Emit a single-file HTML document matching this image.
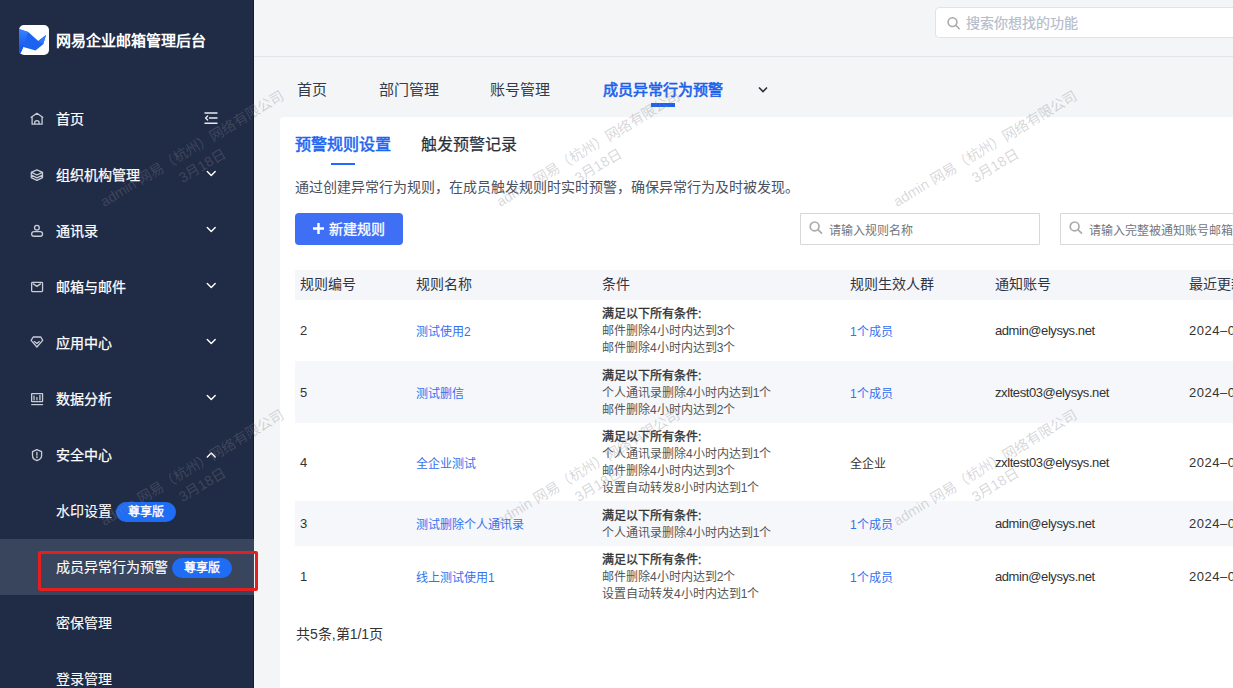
<!DOCTYPE html>
<html lang="zh-CN"><head><meta charset="utf-8">
<style>
*{box-sizing:border-box;margin:0;padding:0}
html,body{width:1233px;height:688px;overflow:hidden}
body{position:relative;font-family:"Liberation Sans",sans-serif;background:#f3f5f7;color:#333}
.abs{position:absolute}
#side{position:absolute;left:0;top:0;width:254px;height:688px;background:#202b46}
#side .edge{position:absolute;left:253px;top:0;width:1px;height:688px;background:#151d33}
.logo{position:absolute;left:19px;top:25px;width:30px;height:30px;border-radius:5px;background:#fff;overflow:hidden}
.brand{position:absolute;left:56px;top:31px;font-size:15px;line-height:20px;font-weight:700;color:#fff;white-space:nowrap}
.nav{position:absolute;left:0;width:254px;height:56px}
.nav .ic{position:absolute;left:30px;top:21px;width:14px;height:14px}
.nav .t{position:absolute;left:56px;top:18px;font-size:14px;line-height:20px;color:#fff;white-space:nowrap;-webkit-text-stroke:0.25px #fff}
.nav .t.sub{-webkit-text-stroke:0.12px #fff}
.nav .chev{position:absolute;left:206px;top:24px;width:10px;height:8px}
.badge{display:inline-block;vertical-align:top;position:relative;top:1px;margin-left:4px;-webkit-text-stroke:0.35px #fff;width:60px;height:20px;border-radius:10px;background:#1f6cf5;color:#fff;font-size:12px;line-height:20px;text-align:center;font-weight:400}
#hdr{position:absolute;left:254px;top:0;right:0;height:57px;border-bottom:1px solid #e2e6ec;background:#f3f5f7}
.gsearch{position:absolute;left:935px;top:7px;width:320px;height:31px;border:1px solid #dfe3ea;border-radius:4px;background:#fff}
.ptab{position:absolute;top:80px;font-size:15px;line-height:20px;color:#333a48;white-space:nowrap}
.card{position:absolute;left:280px;top:117px;width:1000px;height:600px;background:#fff;border-radius:4px}
.stab{position:absolute;top:134px;font-size:16px;line-height:22px;white-space:nowrap}
.desc{position:absolute;left:295px;top:177px;font-size:14px;line-height:20px;color:#4b5161;white-space:nowrap}
.btn{position:absolute;left:295px;top:213px;width:108px;height:32px;border-radius:4px;background:#3f6ff5;color:#fff}
.inp{position:absolute;top:213px;height:32px;border:1px solid #d6d7da;border-radius:1px;background:#fff}
.inp span{position:absolute;left:28px;top:9px;font-size:12px;line-height:17px;color:#72767e;white-space:nowrap}
table{position:absolute;left:295px;top:270px;border-collapse:collapse;width:1000px;table-layout:fixed}
th{height:30px;background:#f5f6f9;font-weight:400;font-size:14px;line-height:18px;color:#2f3546;text-align:left;padding:5px 0 7px 5px;white-space:nowrap}
td{font-size:12px;line-height:17px;color:#333;padding:5px 0 5px 5px;vertical-align:middle;white-space:nowrap}
tr.g td{background:#f6f7fa}
td.num,td.mail{font-size:13px}
td.mail{letter-spacing:-0.42px}
td.date{font-size:13px;letter-spacing:0.5px}
.lnk{color:#3470f0}
td.lnk,td.cjk{padding-top:7px;padding-bottom:3px}
td.cond{padding:6px 0 4px 5px;color:#555}
.cond b{font-weight:400;color:#333;-webkit-text-stroke:0.35px #333}
.wm{position:absolute;width:260px;margin-left:-130px;text-align:center;font-size:14.2px;line-height:20px;color:rgba(130,130,140,0.33);white-space:nowrap;transform:rotate(-31deg);pointer-events:none}
</style></head><body>

<div id="side">
  <div class="edge"></div>
  <div class="logo">
    <svg width="30" height="30" viewBox="0 0 30 30">
      <defs><linearGradient id="lg1" x1="0" y1="0" x2="0" y2="1"><stop offset="0" stop-color="#3a84ff"/><stop offset="1" stop-color="#0b4ee8"/></linearGradient></defs>
      <polygon points="0,3.9 9.2,7 19.3,16.1 27,10 24.2,19.3 16.5,25.4 4.3,22.1 1.5,28.2 0,27.4" fill="#1c63f4"/>
      <polygon points="0,3.9 9.2,7 4.3,22.1 1.5,28.2 0,27.4" fill="url(#lg1)"/>
      <polygon points="19.3,16.1 27,10 24.2,19.3" fill="#2f7cff"/>
    </svg>
  </div>
  <div class="brand">网易企业邮箱管理后台</div>

  <div class="nav" style="top:91px"><div class="t">首页</div></div>
  <div class="nav" style="top:147px"><div class="t">组织机构管理</div></div>
  <div class="nav" style="top:203px"><div class="t">通讯录</div></div>
  <div class="nav" style="top:259px"><div class="t">邮箱与邮件</div></div>
  <div class="nav" style="top:315px"><div class="t">应用中心</div></div>
  <div class="nav" style="top:371px"><div class="t">数据分析</div></div>
  <div class="nav" style="top:427px"><div class="t">安全中心</div></div>
  <div class="nav" style="top:483px"><div class="t sub">水印设置<span class="badge">尊享版</span></div></div>
  <div class="nav" style="top:539px;background:#39445d"><div class="t sub">成员异常行为预警<span class="badge">尊享版</span></div></div>
  <div class="nav" style="top:595px"><div class="t sub">密保管理</div></div>
  <div class="nav" style="top:651px"><div class="t sub">登录管理</div></div>
<svg class="abs" style="left:0;top:0" width="254" height="688" viewBox="0 0 254 688" fill="none" stroke="#c9cdd6" stroke-width="1.3" stroke-linejoin="round" stroke-linecap="round">
  <path d="M31.2 117.3 L36.9 113.3 L42.7 117.3 M32.1 117 V124.2 H42.1 V117 M34.7 124.2 V122.8 A2.2 2.2 0 0 1 39.1 122.8 V124.2"/>
  <path d="M36.9 169.9 L42.5 172.3 V177.6 L36.9 180.3 L31.3 177.6 V172.3 Z M31.3 172.3 L36.9 175 L42.5 172.3 M31.3 175.2 L36.9 177.8 L42.5 175.2"/>
  <circle cx="36.9" cy="227.8" r="2.4"/><rect x="31.65" y="231.65" width="10.9" height="4.6" rx="2.3"/>
  <rect x="31.65" y="282.45" width="10.9" height="9.2" rx="0.8"/><path d="M33.3 283.9 L36.9 286.4 L40.5 283.9"/>
  <path d="M33.2 337 H40.8 L42.7 340.4 L36.9 347 L31.1 340.4 Z M34.3 341.6 L36.9 343.6 L39.3 341.6"/>
  <rect x="31.65" y="393.55" width="10.9" height="8.1" rx="0.3"/><path d="M31.2 404.6 H43.1" stroke-linecap="butt" stroke-width="1.2"/>
  <g fill="#9aa0ad" stroke="none"><rect x="33.2" y="395.6" width="1.7" height="4.8"/><rect x="36" y="396.9" width="1.7" height="3.5"/><rect x="39" y="394.9" width="1.8" height="5.5"/></g>
  <path d="M36.9 449.6 L41.6 451.6 V455.5 C41.6 458.2 39.4 459.9 36.9 460.5 C34.4 459.9 32.5 458.2 32.5 455.5 V451.6 Z M36.9 452.5 V455.2"/>
  <circle cx="36.9" cy="457.3" r="0.3" fill="#c9cdd6"/>
  <g stroke="#e8eaef" stroke-width="1.4"><path d="M205 113 H217 M209.5 118 H217 M205 123.3 H217 M207.6 116 L205.6 118 L207.6 120"/></g>
  <g stroke="#fff" stroke-width="1.4"><path d="M207.3 171.4 L211.25 175.4 L215.2 171.4 M207.3 227.4 L211.25 231.4 L215.2 227.4 M207.3 283.4 L211.25 287.4 L215.2 283.4 M207.3 339.4 L211.25 343.4 L215.2 339.4 M207.3 395.4 L211.25 399.4 L215.2 395.4 M207.3 457 L211.25 453 L215.2 457"/></g>
</svg>
</div>
<div class="abs" style="left:38px;top:551px;width:220px;height:40px;border:3px solid #e3201f;border-radius:2px"></div>

<div id="hdr"></div>
<div class="gsearch"><svg class="abs" style="left:10px;top:6px" width="16" height="16" viewBox="0 0 16 16" fill="none" stroke="#a9a9a9" stroke-width="1.6" stroke-linecap="round"><circle cx="6.5" cy="8.1" r="4.4"/><path d="M9.8 11.3 L13.2 14.7"/></svg><span class="abs" style="left:30px;top:5px;font-size:14px;line-height:20px;color:#b5bccb;-webkit-text-stroke:0.2px #b5bccb">搜索你想找的功能</span></div>

<div class="ptab" style="left:297px">首页</div>
<div class="ptab" style="left:379px">部门管理</div>
<div class="ptab" style="left:490px">账号管理</div>
<div class="ptab" style="left:603px;color:#1d62ea;-webkit-text-stroke:0.6px #1d62ea">成员异常行为预警</div>
<div class="abs" style="left:651px;top:103px;width:24px;height:3.5px;background:#1d62ea"></div>

<svg class="abs" style="left:757px;top:85px" width="12" height="10" viewBox="0 0 12 10" fill="none" stroke="#2b303c" stroke-width="1.6"><path d="M2 2.5 L6 6.5 L10 2.5"/></svg>
<div class="card"></div>
<div class="stab" style="left:295px;color:#1e66f2;-webkit-text-stroke:0.55px #1e66f2">预警规则设置</div>
<div class="stab" style="left:421px;color:#2b2f3a;-webkit-text-stroke:0.2px #2b2f3a">触发预警记录</div>
<div class="abs" style="left:331px;top:163px;width:24px;height:2px;background:#1f6bff"></div>
<div class="desc">通过创建异常行为规则，在成员触发规则时实时预警，确保异常行为及时被发现。</div>
<div class="btn"><svg class="abs" style="left:18px;top:10px" width="12" height="12" viewBox="0 0 12 12" stroke="#fff" stroke-width="2.4"><path d="M0 5.5 H11 M5.5 0 V11"/></svg><span class="abs" style="left:34px;top:6px;font-size:14px;line-height:20px;-webkit-text-stroke:0.3px #fff">新建规则</span></div>
<div class="inp" style="left:800px;width:240px"><svg class="abs" style="left:8px;top:7px" width="16" height="16" viewBox="0 0 16 16" fill="none" stroke="#ababab" stroke-width="1.7" stroke-linecap="round"><circle cx="5.6" cy="5.4" r="4.4"/><path d="M8.9 8.7 L12.5 12.2"/></svg><span>请输入规则名称</span></div>
<div class="inp" style="left:1060px;width:240px"><svg class="abs" style="left:8px;top:7px" width="16" height="16" viewBox="0 0 16 16" fill="none" stroke="#ababab" stroke-width="1.7" stroke-linecap="round"><circle cx="5.6" cy="5.4" r="4.4"/><path d="M8.9 8.7 L12.5 12.2"/></svg><span>请输入完整被通知账号邮箱</span></div>

<table>
<colgroup><col style="width:116px"><col style="width:186px"><col style="width:248px"><col style="width:145px"><col style="width:194px"><col style="width:111px"></colgroup>
<tr><th>规则编号</th><th>规则名称</th><th>条件</th><th>规则生效人群</th><th>通知账号</th><th>最近更新时间</th></tr>
<tr style="height:61px"><td class="num">2</td><td class="lnk">测试使用2</td><td class="cond"><b>满足以下所有条件:</b><br>邮件删除4小时内达到3个<br>邮件删除4小时内达到3个</td><td class="lnk">1个成员</td><td class="mail">admin@elysys.net</td><td class="date">2024–03-18 10:20</td></tr>
<tr class="g" style="height:62px"><td class="num">5</td><td class="lnk">测试删信</td><td class="cond"><b>满足以下所有条件:</b><br>个人通讯录删除4小时内达到1个<br>邮件删除4小时内达到2个</td><td class="lnk">1个成员</td><td class="mail">zxltest03@elysys.net</td><td class="date">2024–03-18 10:20</td></tr>
<tr style="height:78px"><td class="num">4</td><td class="lnk">全企业测试</td><td class="cond"><b>满足以下所有条件:</b><br>个人通讯录删除4小时内达到1个<br>邮件删除4小时内达到3个<br>设置自动转发8小时内达到1个</td><td class="cjk">全企业</td><td class="mail">zxltest03@elysys.net</td><td class="date">2024–03-18 10:20</td></tr>
<tr class="g" style="height:45px"><td class="num">3</td><td class="lnk">测试删除个人通讯录</td><td class="cond"><b>满足以下所有条件:</b><br>个人通讯录删除4小时内达到1个</td><td class="lnk">1个成员</td><td class="mail">admin@elysys.net</td><td class="date">2024–03-18 10:20</td></tr>
<tr style="height:61px"><td class="num">1</td><td class="lnk">线上测试使用1</td><td class="cond"><b>满足以下所有条件:</b><br>邮件删除4小时内达到2个<br>设置自动转发4小时内达到1个</td><td class="lnk">1个成员</td><td class="mail">admin@elysys.net</td><td class="date">2024–03-18 10:20</td></tr>
</table>
<div class="abs" style="left:296px;top:624px;font-size:14px;line-height:20px;color:#333">共5条,第1/1页</div>

<div class="wm" style="left:197px;top:137px">admin 网易（杭州）网络有限公司<br>3月18日</div>
<div class="wm" style="left:593px;top:137px">admin 网易（杭州）网络有限公司<br>3月18日</div>
<div class="wm" style="left:990px;top:137px">admin 网易（杭州）网络有限公司<br>3月18日</div>
<div class="wm" style="left:197px;top:456px">admin 网易（杭州）网络有限公司<br>3月18日</div>
<div class="wm" style="left:593px;top:456px">admin 网易（杭州）网络有限公司<br>3月18日</div>
<div class="wm" style="left:990px;top:456px">admin 网易（杭州）网络有限公司<br>3月18日</div>
</body></html>
